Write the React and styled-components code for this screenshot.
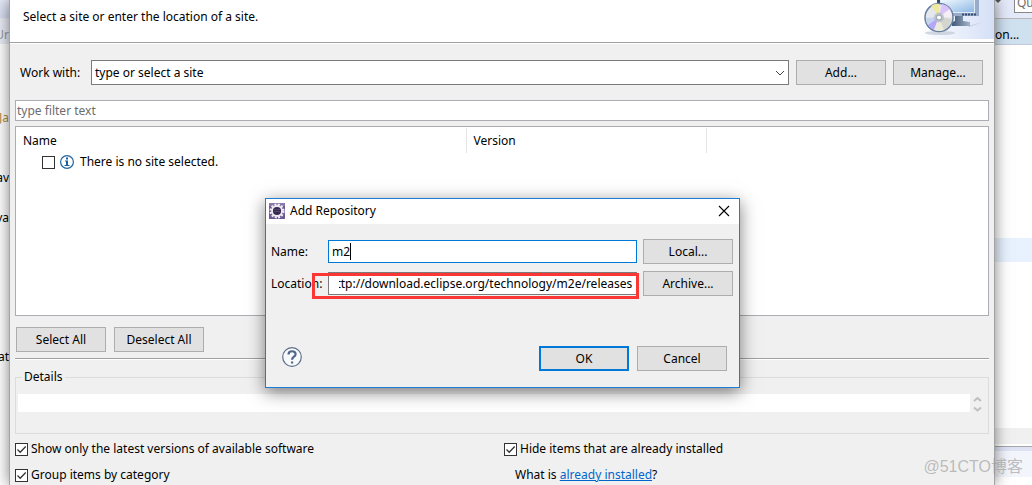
import React, { useEffect, useRef } from 'react';
import styled, { createGlobalStyle } from 'styled-components';

const GlobalStyle = createGlobalStyle`
* {
    box-sizing: border-box;
}
body {
    margin: 0;
    background: #fff;
    color: #000;
    overflow: hidden;
    font-family: "Noto Sans", "Noto Sans CJK SC", sans-serif;
    font-size: 12px;
    line-height: 18px;
}
button, input, textarea {
    font: inherit;
    color: inherit;
}
`
const Desktop = styled.div`
display: grid;
grid-template-columns: 9px minmax(0, 1fr) 37px;
height: 100vh;
overflow: hidden;
position: relative;
`
const Strip = styled.div`
display: flex;
flex-direction: column;
overflow: hidden;
white-space: nowrap;
`
const Band = styled.div`
display: flex;
flex: none;
height: ${p => p.$height}px;
align-items: ${p => p.$align || 'center'};
justify-content: ${p => p.$justify || 'flex-start'};
background: ${p => p.$bg || 'transparent'};
border-top: ${p => p.$line ? `1px solid ${p.$line}` : 'none'};
color: ${p => p.$color || '#000'};
svg {
    flex: none;
}
`
const QuickBox = styled.span`
flex: none;
width: 60px;
height: 13px;
margin-left: 11px;
padding-left: 2px;
border: 1px solid #888;
border-top: none;
background: #fff;
color: #6d6d6d;
line-height: 6px;
overflow: hidden;
`
const Wizard = styled.main`
display: flex;
flex-direction: column;
min-width: 0;
z-index: 1;
border: solid #a3a3a3;
border-width: 0 1px;
background: #f0f0f0;
box-shadow: 0 0 14px rgba(0, 0, 0, 0.5);
`
const Banner = styled.header`
display: flex;
justify-content: space-between;
flex: none;
height: 43px;
padding-left: 13px;
background: #fff;
border-bottom: 1px solid #a0a0a0;
p {
    margin: 8px 0 0;
}
svg {
    display: block;
}
`
const Content = styled.div`
display: flex;
flex-direction: column;
padding: 17px 5px 0;
border-top: 1px solid #fff;
margin-bottom: -1px;
`
const WorkRow = styled.div`
display: flex;
align-items: center;
gap: 7px;
margin-top: -1px;
padding: 0 6px 0 5px;
label {
    width: 64px;
}
`
const Combo = styled.div`
display: flex;
align-items: center;
flex: 1;
height: 25px;
padding-right: 3px;
border: 1px solid #7a7a7a;
background: #fff;
input {
    flex: 1;
    min-width: 0;
    border: none;
    outline: none;
    padding: 0 3px;
    background: none;
}
button {
    display: flex;
    padding: 0;
    border: none;
    background: none;
}
`
const Button = styled.button`
flex: none;
width: 90px;
height: 25px;
padding: 0;
border: ${p => p.$primary ? '2px solid #0078d7' : '1px solid #adadad'};
background: #e1e1e1;
`
const Filter = styled.input`
height: 21px;
margin-top: 15px;
padding: 0 1px;
border: 1px solid #abadb3;
background: #fff;
outline: none;
&::placeholder {
    color: #6d6d6d;
    opacity: 1;
}
`
const SiteList = styled.div`
height: 190px;
margin-top: 5px;
padding-top: 1px;
border: 1px solid #abadb3;
background: #fff;
`
const Table = styled.table`
width: 100%;
table-layout: fixed;
border-collapse: collapse;
th {
    height: 25px;
    padding: 0 7px;
    border-right: 1px solid #e5e5e5;
    font-weight: normal;
    text-align: left;
}
th:last-child {
    border-right: none;
}
td {
    padding: 0 0 0 26px;
}
`
const NameCol = styled.col`
width: 450px;
`
const VersionCol = styled.col`
width: 240px;
`
const Item = styled.label`
display: flex;
align-items: center;
gap: 5px;
height: 18px;
svg {
    margin-right: 1px;
}
`
const Tick = styled.span`
display: grid;
flex: none;
width: 13px;
height: 13px;
input, svg {
    grid-area: 1 / 1;
    width: 13px;
    height: 13px;
    margin: 0;
    pointer-events: none;
}
input {
    appearance: none;
    border: 1px solid #333;
    background: #fff;
    pointer-events: auto;
}
input:not(:checked) + svg {
    visibility: hidden;
}
`
const ButtonRow = styled.div`
display: flex;
gap: 8px;
margin-top: 11px;
padding-left: 1px;
`
const Divider = styled.hr`
width: 100%;
height: 2px;
margin: 6px 0 0;
border: none;
border-top: 1px solid #a0a0a0;
background: #fff;
`
const Details = styled.fieldset`
min-width: 0;
height: 66px;
margin: 8px 0 0;
padding: 8px 6px 0 2px;
border: 1px solid #dcdcdc;
legend {
    margin-left: 4px;
    padding: 0 2px;
}
div {
    display: flex;
    gap: 3px;
}
textarea {
    display: block;
    flex: 1;
    height: 18px;
    padding: 0;
    border: none;
    outline: none;
    resize: none;
    overflow: hidden;
    background: #fff;
}
`
const Options = styled.div`
display: grid;
grid-template-columns: 489px 1fr;
row-gap: 8px;
margin-top: 6px;
`
const Option = styled.label`
display: flex;
align-items: center;
gap: 3px;
`
const Hint = styled.span`
padding-left: 11px;
a {
    color: #0066cc;
}
`
const Popup = styled.section`
position: absolute;
z-index: 2;
left: 265px;
top: 198px;
width: 475px;
border: 1px solid #1a7fd4;
background: #f0f0f0;
box-shadow: 0 4px 16px rgba(0, 0, 0, 0.5);
`
const TitleBar = styled.header`
display: flex;
align-items: center;
height: 25px;
padding: 0 9px 1px 3px;
background: #fff;
h1 {
    flex: 1;
    margin: 0 0 0 5px;
    font-size: 12px;
    font-weight: normal;
}
button {
    display: flex;
    padding: 0;
    border: none;
    background: none;
}
`
const Form = styled.form`
display: flex;
flex-direction: column;
gap: 7px;
padding: 15px 6px 0 5px;
`
const FormRow = styled.div`
display: grid;
grid-template-columns: 57px 1fr 90px;
align-items: center;
position: relative;
`
const Field = styled.span`
display: flex;
align-items: center;
height: 23px;
margin-right: 6px;
padding: 0 4px 0 ${p => p.$active ? 3 : 10}px;
border: 1px solid ${p => p.$active ? '#0078d7' : '#7a7a7a'};
background: #fff;
input {
    width: 100%;
    min-width: 0;
    padding: 0;
    border: none;
    outline: none;
    background: none;
}
`
const NameInput = styled.input`
&& {
    width: auto;
    field-sizing: content;
}
`
const Caret = styled.i`
width: 1px;
height: 17px;
background: #000;
`
const Marker = styled.span`
position: absolute;
left: 41px;
right: 94px;
top: 2px;
height: 26px;
border: 3px solid #fb3635;
pointer-events: none;
`
const Footer = styled.footer`
display: flex;
align-items: center;
gap: 8px;
padding: 50px 12px 16px 16px;
`
const HelpButton = styled.button`
display: flex;
margin-right: auto;
padding: 0 0 3px;
border: none;
background: none;
`
const Watermark = styled.span`
position: absolute;
z-index: 3;
right: 9px;
bottom: 6px;
color: rgba(150, 150, 150, 0.6);
font-family: "Liberation Sans", "Noto Sans CJK SC", sans-serif;
font-size: 16px;
line-height: 24px;
`

const BannerArt = () => (
    <svg width="75" height="39" viewBox="0 0 75 39">
        <defs>
            <linearGradient id="sky" x1="0" x2="1">
                <stop offset="0" stopColor="#fff" />
                <stop offset="1" stopColor="#d5e0f7" />
            </linearGradient>
            <linearGradient id="screen" x1="0" x2="1" y2="1">
                <stop offset="0" stopColor="#f1f8fe" />
                <stop offset="1" stopColor="#8db8e4" />
            </linearGradient>
            <linearGradient id="stand" x1="0" x2="1">
                <stop offset="0" stopColor="#3f5877" />
                <stop offset="1" stopColor="#a3b4c9" />
            </linearGradient>
        </defs>
        <path d="M-1 39C4 14 16 4 28 0H75V39Z" fill="url(#sky)" />
        <ellipse cx="21" cy="33" rx="15" ry="2" fill="#b9bfd2" opacity=".6" />
        <path d="M49 26L64 22L50 27Z" fill="#aab6d0" opacity=".6" />
        <path d="M18 0H60V16H18Z" fill="#98abc7" />
        <path d="M18 0H21V5H18Z" fill="#334b6e" />
        <path d="M21 0H56V13H21Z" fill="#dfeaf8" />
        <path d="M22 0H55V12H22Z" fill="url(#screen)" />
        <path d="M43 14.5H58" stroke="#344d75" strokeWidth="2" strokeDasharray="2 1" />
        <path d="M36 16H44V21L51 22V26H33V22L36 21Z" fill="url(#stand)" />
        <circle cx="20" cy="17.500" r="14" fill="#e4e8ec" stroke="#667fa0" strokeWidth="1.500" />
        <path d="M20 17L12 6Q16 3 20 4Z" fill="#eee99e" />
        <path d="M20 17L23 4Q28 5 31 9Z" fill="#d9c3fa" />
        <path d="M20 17L31 9Q33 13 33 17Z" fill="#f5eef5" />
        <path d="M20 17L7 18Q7 22 9 25Z" fill="#c5d3ee" />
        <path d="M20 17L9 25Q12 29 15 30Z" fill="#b4a7fb" />
        <path d="M20 17L15 30Q21 32 25 30Z" fill="#ecebd9" />
        <path d="M20 17L33 19Q31 27 25 30Z" fill="#d2d6cf" />
        <circle cx="20" cy="17.500" r="5" fill="#b6bbc1" opacity=".8" />
        <circle cx="20" cy="17.500" r="2.500" fill="#fff" stroke="#8e9cad" />
    </svg>
)

const InfoIcon = () => (
    <svg width="14" height="14" viewBox="0 0 14 14">
        <circle cx="7" cy="7" r="6.400" fill="#fff" stroke="#22659f" strokeWidth="1.200" />
        <path d="M6 2.500H8V4.500H6ZM5 5.500H8V10H9.500V11H4.500V10H6V6.500H5Z" fill="#1b5f9e" />
    </svg>
)

const GearIcon = () => (
    <svg width="16" height="16" viewBox="0 0 16 16">
        <path d="M0 0H16V16H0Z" fill="#6f5896" />
        <path d="M0 0H16V3H0Z" fill="#8c78ab" />
        <circle cx="8" cy="8" r="6.400" fill="none" stroke="#f2eff5" strokeWidth="2.200" strokeDasharray="2 1.351" />
        <circle cx="8" cy="8" r="5" fill="#36294d" stroke="#eeebf2" strokeWidth="1.800" />
        <path d="M4.500 6.500H11.500M4.500 8.500H11.500" stroke="#5d4f75" strokeWidth=".7" />
    </svg>
)

const HelpIcon = () => (
    <svg width="20" height="20" viewBox="0 0 20 20">
        <circle cx="10" cy="10" r="9.300" fill="#f8f9fb" stroke="#5d6f8c" strokeWidth="1.200" />
        <path d="M6.500 7.400C6.500 3.200 13.600 3.300 13.600 7.200C13.600 9.700 10 9.700 10 12.800" fill="none" stroke="#52658a" strokeWidth="2.200" />
        <path d="M9 14.500H11.200V16.500H9Z" fill="#52658a" />
    </svg>
)

const Check = ({ defaultChecked }) => (
    <Tick>
        <input type="checkbox" defaultChecked={defaultChecked} />
        <svg viewBox="0 0 13 13"><path d="M2.500 6.500L5.200 9.200L10.700 3.500" fill="none" stroke="#333" strokeWidth="1.300" /></svg>
    </Tick>
)

const LeftStrip = () => (
    <Strip aria-hidden="true">
        <Band $height={18} $bg="linear-gradient(#e6e9f7, #d6def2)" />
        <Band $height={26} $line="#e8e8ee" $bg="#eaedf7" $color="#999" $align="flex-end" $justify="flex-end">Ur</Band>
        <Band $height={65} />
        <Band $height={18} $color="#b58c3c" $justify="flex-end">Ja</Band>
        <Band $height={42} />
        <Band $height={18} $justify="flex-end">av</Band>
        <Band $height={22} />
        <Band $height={18} $justify="flex-end">va</Band>
        <Band $height={121} />
        <Band $height={18} $justify="flex-end">at</Band>
    </Strip>
)

const RightStrip = () => (
    <Strip aria-hidden="true">
        <Band $height={18} $align="flex-start" $bg="#e5eafa">
            <svg width="8" height="4"><path d="M0 0H6L3 3Z" fill="#555" /></svg>
            <QuickBox>Quick</QuickBox>
        </Band>
        <Band $height={26} $line="#b7b7b7" $bg="#cfe0ef" $align="flex-end">on...</Band>
        <Band $height={194} $line="#c2c9dc" />
        <Band $height={24} $bg="#e8f2fe" />
        <Band $height={166} />
        <Band $height={16} $bg="#f0f0f0" />
        <Band $height={2} />
        <Band $height={5} $line="#a5a5a5" $bg="#dde3f4" />
        <Band $height={26} $bg="#f3f5fc" />
    </Strip>
)

const AddRepository = () => {
    const location = useRef(null);
    // keep the end of a long address in view
    useEffect(() => {
        location.current.scrollLeft = location.current.scrollWidth;
    }, []);
    return (
        <Popup role="dialog" aria-labelledby="popup-title">
            <TitleBar>
                <GearIcon />
                <h1 id="popup-title">Add Repository</h1>
                <button aria-label="Close">
                    <svg width="12" height="12"><path d="M1 1L11 11M11 1L1 11" stroke="#000" strokeWidth="1.100" /></svg>
                </button>
            </TitleBar>
            <Form onSubmit={e => e.preventDefault()}>
                <FormRow>
                    <label htmlFor="name">Name:</label>
                    <Field $active><NameInput id="name" defaultValue="m2" /><Caret /></Field>
                    <Button type="button">Local...</Button>
                </FormRow>
                <FormRow>
                    <label htmlFor="location">Location:</label>
                    <Field>
                        <input id="location" ref={location} defaultValue="http://download.eclipse.org/technology/m2e/releases" />
                    </Field>
                    <Button type="button">Archive...</Button>
                    <Marker />
                </FormRow>
            </Form>
            <Footer>
                <HelpButton aria-label="Help"><HelpIcon /></HelpButton>
                <Button $primary>OK</Button>
                <Button>Cancel</Button>
            </Footer>
        </Popup>
    );
}

const App = () => (
    <Desktop>
        <GlobalStyle />
        <LeftStrip />
        <Wizard>
            <Banner>
                <p>Select a site or enter the location of a site.</p>
                <BannerArt />
            </Banner>
            <Content>
                <WorkRow>
                    <label htmlFor="site">Work with:</label>
                    <Combo>
                        <input id="site" defaultValue="type or select a site" />
                        <button aria-label="Show sites">
                            <svg width="10" height="6"><path d="M1 1L5 5L9 1" fill="none" stroke="#444" /></svg>
                        </button>
                    </Combo>
                    <Button>Add...</Button>
                    <Button>Manage...</Button>
                </WorkRow>
                <Filter placeholder="type filter text" aria-label="Filter" />
                <SiteList>
                    <Table>
                        <colgroup>
                            <NameCol />
                            <VersionCol />
                            <col />
                        </colgroup>
                        <thead>
                            <tr><th>Name</th><th>Version</th><th /></tr>
                        </thead>
                        <tbody>
                            <tr>
                                <td colSpan={3}>
                                    <Item><Check /><InfoIcon />There is no site selected.</Item>
                                </td>
                            </tr>
                        </tbody>
                    </Table>
                </SiteList>
                <ButtonRow>
                    <Button>Select All</Button>
                    <Button>Deselect All</Button>
                </ButtonRow>
                <Divider />
                <Details>
                    <legend>Details</legend>
                    <div>
                        <textarea readOnly aria-label="Details" />
                        <svg width="9" height="18" viewBox="0 0 9 18">
                            <path d="M1 7L4.500 4L8 7M1 13.500L4.500 16.500L8 13.500" fill="none" stroke="#bfbfbf" strokeWidth="2" />
                        </svg>
                    </div>
                </Details>
                <Options>
                    <Option><Check defaultChecked />Show only the latest versions of available software</Option>
                    <Option><Check defaultChecked />Hide items that are already installed</Option>
                    <Option><Check defaultChecked />Group items by category</Option>
                    <Hint>What is <a href="#installed">already installed</a>?</Hint>
                </Options>
            </Content>
        </Wizard>
        <RightStrip />
        <AddRepository />
        <Watermark>@51CTO博客</Watermark>
    </Desktop>
)

export default App;
